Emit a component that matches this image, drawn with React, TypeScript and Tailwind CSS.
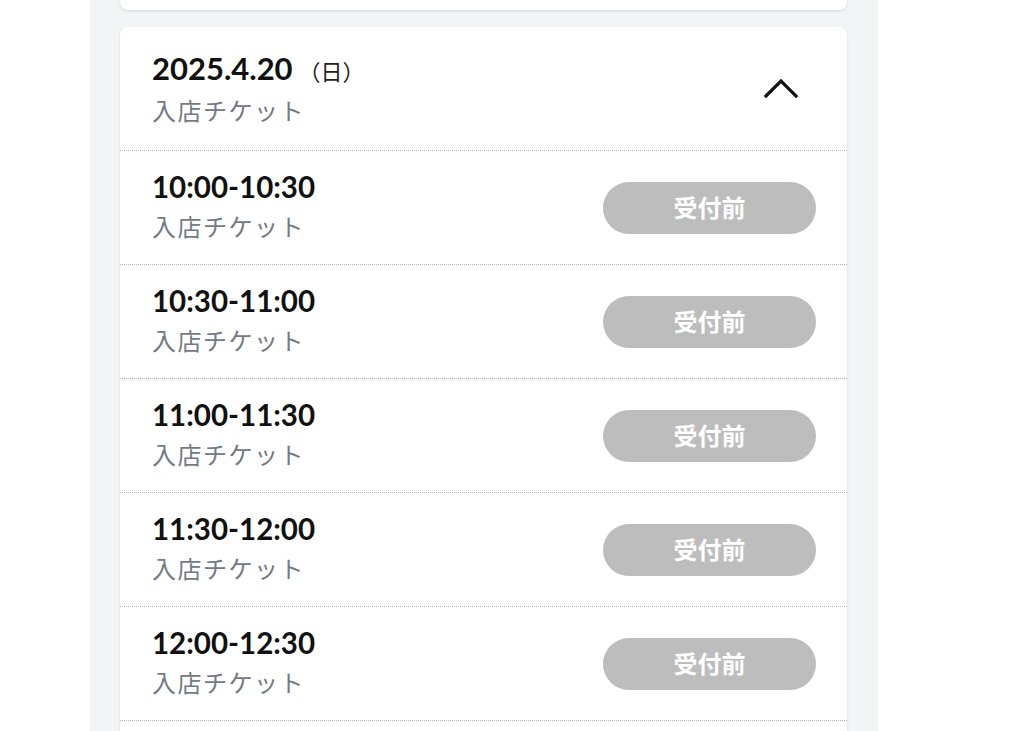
const slots = ['10:00-10:30', '10:30-11:00', '11:00-11:30', '11:30-12:00', '12:00-12:30']

function ChevronUp() {
  return (
    <svg width="36" height="22" viewBox="0 0 36 22" fill="none">
      <path d="M3 19L18 4L33 19" stroke="#111" strokeWidth="3.2" strokeLinecap="square" />
    </svg>
  )
}

export default function App() {
  return (
    <div className="min-h-screen bg-white" style={{ fontFamily: "Lato, 'Noto Sans CJK JP', sans-serif" }}>
      <div className="ml-[90px] h-[731px] w-[788px] overflow-hidden bg-[#f3f4f6] pl-[30px] pr-[31px]">
        {/* previous day card, scrolled off */}
        <div className="h-[10px] rounded-b-lg bg-white shadow-[0_1px_3px_rgba(0,0,0,0.12)]" />

        <div className="mt-[17px] rounded-lg bg-white shadow-[0_1px_3px_rgba(0,0,0,0.1)]">
          <div className="flex items-center justify-between pl-8 pr-[48px] pt-5 pb-[21px]">
            <div>
              <div className="flex items-baseline leading-[42px]">
                <span className="text-[31px] font-bold text-[#111]">2025.4.20</span>
                <span className="ml-[6px] text-[22px] text-[#222]">（日）</span>
              </div>
              <div className="text-[24px] leading-[36px] tracking-[1.5px] text-[#737a86]">入店チケット</div>
            </div>
            <ChevronUp />
          </div>

          {slots.map((slot) => (
            <div
              key={slot}
              className="flex items-center justify-between border-t border-dotted border-[#b5b5b5] pl-8 pr-[31px] pt-[14px] pb-[19px]"
            >
              <div>
                <div className="text-[29.5px] font-bold leading-[44px] text-[#111]">{slot}</div>
                <div className="text-[24px] leading-[36px] tracking-[1.5px] text-[#737a86]">入店チケット</div>
              </div>
              <button className="mt-[6px] flex h-[52px] w-[213px] items-center justify-center rounded-full bg-[#bdbdbd] text-[24px] font-bold text-white">
                受付前
              </button>
            </div>
          ))}
          <div className="h-[40px] border-t border-dotted border-[#b5b5b5]" />
        </div>
      </div>
    </div>
  )
}
